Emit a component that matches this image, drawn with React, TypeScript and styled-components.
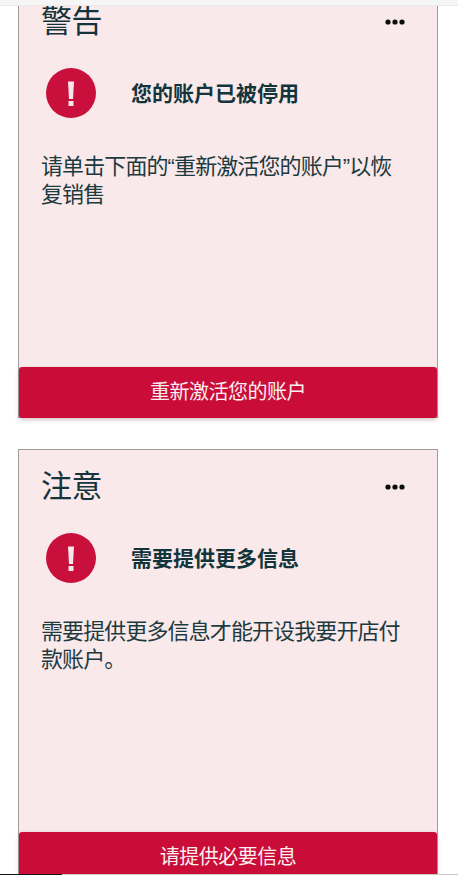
import React from "react";
import styled, { createGlobalStyle } from "styled-components";

const Global = createGlobalStyle`
  html, body { margin: 0; padding: 0; background: #fff; height: 875px; overflow: hidden; }
  * { box-sizing: border-box; }
`;

const Viewport = styled.div`
  position: relative;
  width: 458px;
  height: 875px;
  overflow: hidden;
  font-family: "Liberation Sans", "Noto Sans CJK SC", sans-serif;
`;

const TopEdge = styled.div`
  position: absolute;
  z-index: 2;
  top: 0;
  left: 0;
  right: 0;
  height: 6px;
  background: #f6f6f6;
  border-bottom: 1px solid #ececec;
`;

const BottomEdge = styled.div`
  position: absolute;
  z-index: 2;
  bottom: 0;
  left: 0;
  right: 0;
  height: 1px;
  background: linear-gradient(to right, #111 0 62px, #c9c9c9 62px);
`;

const List = styled.div`
  display: flex;
  flex-direction: column;
  gap: 31px;
  margin-top: -16px;
  padding: 0 20px 0 18px;
`;

const Card = styled.section`
  display: flex;
  flex-direction: column;
  height: 434px;
  background: #f9e9ea;
  border: 1px solid #a39c9c;
`;

const Header = styled.div`
  display: flex;
  align-items: center;
  justify-content: space-between;
  padding: 15px 32px 0 22px;
`;

const Title = styled.h2`
  margin: 0;
  font-size: 31px;
  font-weight: 400;
  line-height: 44px;
  letter-spacing: -0.5px;
  color: #15333a;
`;

const Dots = styled.svg`
  width: 20px;
  height: 6px;
  display: block;
`;

const Status = styled.div`
  display: flex;
  align-items: center;
  gap: 35px;
  margin-top: 24px;
  padding-left: 27px;
`;

const AlertIcon = styled.svg`
  width: 50px;
  height: 50px;
  flex: none;
  display: block;
`;

const StatusText = styled.strong`
  padding-top: 2px;
  font-size: 21px;
  line-height: 28px;
  font-weight: 700;
  color: #12343b;
`;

const Body = styled.p`
  flex: 1;
  margin: 35px 0 0;
  padding: 0 30px 0 22px;
  font-size: 22px;
  line-height: 28px;
  letter-spacing: -0.9px;
  font-weight: 400;
  color: #1d3a40;
`;

const Action = styled.button`
  flex: none;
  height: 51px;
  margin: 0 0 -1px;
  padding: 0 0 1px;
  border: 0;
  border-radius: 3px;
  background: #c90d38;
  box-shadow: 0 2px 4px rgba(120, 60, 70, 0.3);
  color: #fbeef0;
  font-family: inherit;
  font-size: 20px;
  line-height: 26px;
  letter-spacing: -0.5px;
`;

const DotsIcon = () => (
  <Dots viewBox="0 0 20 6" aria-hidden="true">
    <circle cx="3" cy="3" r="2.6" fill="#0c0c0c" />
    <circle cx="10" cy="3" r="2.6" fill="#0c0c0c" />
    <circle cx="17" cy="3" r="2.6" fill="#0c0c0c" />
  </Dots>
);

const Alert = () => (
  <AlertIcon viewBox="0 0 50 50" aria-hidden="true">
    <circle cx="25" cy="25" r="25" fill="#c90f3b" />
    <path d="M22 13.5H28L27 31H23Z" fill="#f9e6e8" />
    <rect x="22.5" y="33" width="5" height="5" fill="#f9e6e8" />
  </AlertIcon>
);

type Notice = { title: string; status: string; body: string; action: string };

const notices: Notice[] = [
  {
    title: "警告",
    status: "您的账户已被停用",
    body: "请单击下面的“重新激活您的账户”以恢复销售",
    action: "重新激活您的账户",
  },
  {
    title: "注意",
    status: "需要提供更多信息",
    body: "需要提供更多信息才能开设我要开店付款账户。",
    action: "请提供必要信息",
  },
];

export default function App() {
  return (
    <Viewport>
      <Global />
      <TopEdge />
      <List>
        {notices.map((n) => (
          <Card key={n.title}>
            <Header>
              <Title>{n.title}</Title>
              <DotsIcon />
            </Header>
            <Status>
              <Alert />
              <StatusText>{n.status}</StatusText>
            </Status>
            <Body>{n.body}</Body>
            <Action>{n.action}</Action>
          </Card>
        ))}
      </List>
      <BottomEdge />
    </Viewport>
  );
}
